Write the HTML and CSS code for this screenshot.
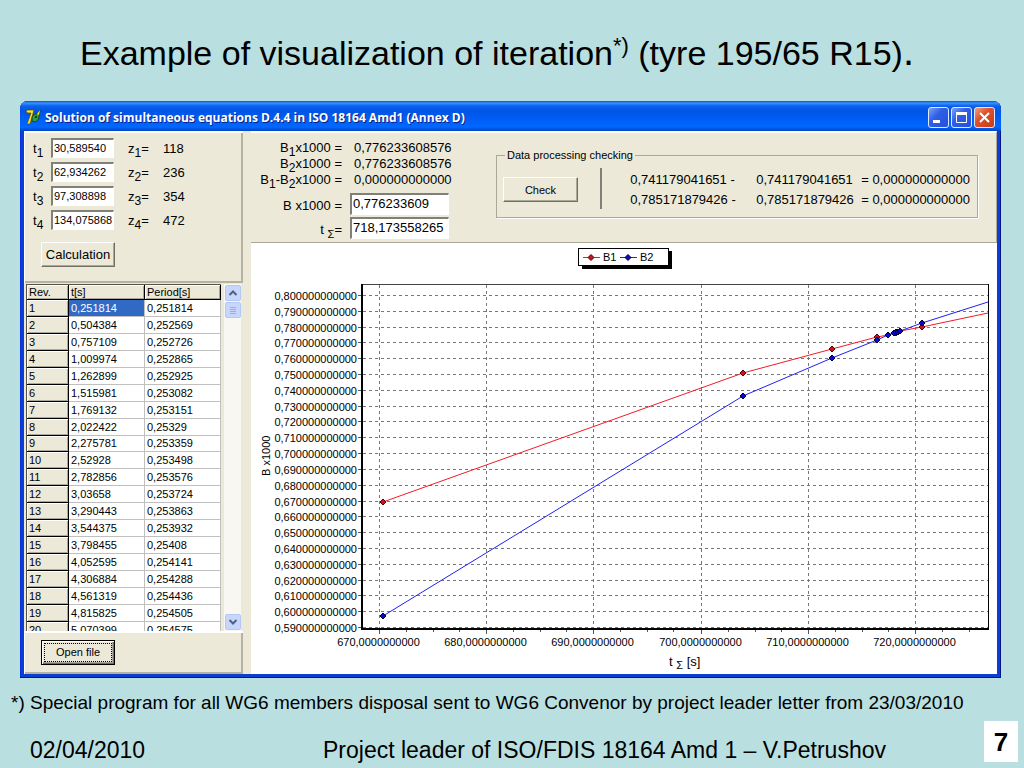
FILE: index.html
```html
<!DOCTYPE html>
<html lang="en">
<head>
    <meta charset="UTF-8">
    <title>Example of visualization of iteration</title>
    <link rel="stylesheet" href="styles.css">
</head>
<body>

<h1>Example of visualization of iteration<sup>*)</sup> (tyre 195/65 R15)<span class="dot">.</span></h1>

<main class="window">
    <header class="titlebar">
        <svg class="app-icon" width="16" height="16" viewBox="0 0 16 16">
            <path d="M1 3 L2 1 H9 L5 15 H2 L6 4 H3 Z" fill="#ffe12e" stroke="#5a4a00" stroke-width="0.7"/>
            <path d="M7 10 C7 6 10 5 12 5 L15 1 L14 7 C14 12 10 14 7 12 Z" fill="#2f9e3c" stroke="#12391a" stroke-width="0.8"/>
            <path d="M12 5 L15 1 L14 6 Z" fill="#ffe12e"/>
            <circle cx="11" cy="8" r="1" fill="#06240c"/>
        </svg>
        <h2>Solution of simultaneous equations D.4.4 in ISO 18164 Amd1 (Annex D)</h2>
        <button class="win-btn" aria-label="Minimize">
            <svg width="19" height="19" viewBox="0 0 19 19"><path d="M4 13.5 H11" stroke="#fff" stroke-width="3"/></svg>
        </button>
        <button class="win-btn" aria-label="Maximize">
            <svg width="19" height="19" viewBox="0 0 19 19"><path d="M4.5 5 V14.5 H14.5 V5" fill="none" stroke="#fff"/><path d="M4 5.5 H15" stroke="#fff" stroke-width="3"/></svg>
        </button>
        <button class="win-btn close" aria-label="Close">
            <svg width="19" height="19" viewBox="0 0 19 19"><path d="M5 5 L14 14 M14 5 L5 14" stroke="#fff" stroke-width="2"/></svg>
        </button>
    </header>

    <div class="client">
        <section class="left">
            <div class="panel times">
                <div class="time-row"><label for="t1">t<sub>1</sub></label><input type="text" id="t1" value="30,589540"><span>z<sub>1</sub>=</span><span>118</span></div>
                <div class="time-row"><label for="t2">t<sub>2</sub></label><input type="text" id="t2" value="62,934262"><span>z<sub>2</sub>=</span><span>236</span></div>
                <div class="time-row"><label for="t3">t<sub>3</sub></label><input type="text" id="t3" value="97,308898"><span>z<sub>3</sub>=</span><span>354</span></div>
                <div class="time-row"><label for="t4">t<sub>4</sub></label><input type="text" id="t4" value="134,075868"><span>z<sub>4</sub>=</span><span>472</span></div>
                <button class="btn calc">Calculation</button>
            </div>

            <div class="table-box">
                <div class="table-view">
                    <table>
                        <thead>
                            <tr><th>Rev.</th><th>t[s]</th><th>Period[s]</th></tr>
                        </thead>
                        <tbody>
                            <tr><th>1</th><td class="selected">0,251814</td><td>0,251814</td></tr>
                            <tr><th>2</th><td>0,504384</td><td>0,252569</td></tr>
                            <tr><th>3</th><td>0,757109</td><td>0,252726</td></tr>
                            <tr><th>4</th><td>1,009974</td><td>0,252865</td></tr>
                            <tr><th>5</th><td>1,262899</td><td>0,252925</td></tr>
                            <tr><th>6</th><td>1,515981</td><td>0,253082</td></tr>
                            <tr><th>7</th><td>1,769132</td><td>0,253151</td></tr>
                            <tr><th>8</th><td>2,022422</td><td>0,25329</td></tr>
                            <tr><th>9</th><td>2,275781</td><td>0,253359</td></tr>
                            <tr><th>10</th><td>2,52928</td><td>0,253498</td></tr>
                            <tr><th>11</th><td>2,782856</td><td>0,253576</td></tr>
                            <tr><th>12</th><td>3,03658</td><td>0,253724</td></tr>
                            <tr><th>13</th><td>3,290443</td><td>0,253863</td></tr>
                            <tr><th>14</th><td>3,544375</td><td>0,253932</td></tr>
                            <tr><th>15</th><td>3,798455</td><td>0,25408</td></tr>
                            <tr><th>16</th><td>4,052595</td><td>0,254141</td></tr>
                            <tr><th>17</th><td>4,306884</td><td>0,254288</td></tr>
                            <tr><th>18</th><td>4,561319</td><td>0,254436</td></tr>
                            <tr><th>19</th><td>4,815825</td><td>0,254505</td></tr>
                            <tr><th>20</th><td>5,070399</td><td>0,254575</td></tr>
                        </tbody>
                    </table>
                </div>
                <div class="scrollbar">
                    <button aria-label="Scroll up"><svg width="14" height="14" viewBox="0 0 14 14"><path d="M3.5 9 L7 5.5 L10.500 9" fill="none" stroke="#4d6185" stroke-width="2"/></svg></button>
                    <div class="thumb"><svg width="14" height="14" viewBox="0 0 14 14"><path d="M4 4.500 H10 M4 6.500 H10 M4 8.500 H10 M4 10.500 H10" stroke="#8cb0f8"/></svg></div>
                    <button class="down" aria-label="Scroll down"><svg width="14" height="14" viewBox="0 0 14 14"><path d="M3.5 5 L7 8.500 L10.500 5" fill="none" stroke="#4d6185" stroke-width="2"/></svg></button>
                </div>
            </div>

            <div class="panel file">
                <button class="btn open"><span>Open file</span></button>
            </div>
        </section>

        <section class="right">
            <div class="results">
                <div class="values">
                    <div class="sums">
                        <span>B<sub>1</sub>x1000 =</span><span>0,776233608576</span>
                        <span>B<sub>2</sub>x1000 =</span><span>0,776233608576</span>
                        <span>B<sub>1</sub>-B<sub>2</sub>x1000 =</span><span>0,000000000000</span>
                    </div>
                    <div class="outputs">
                        <label for="b">B x1000 =</label><input type="text" id="b" value="0,776233609">
                        <label for="ts">t <sub class="sigma">&Sigma;</sub>=</label><input type="text" id="ts" value="718,173558265">
                    </div>
                </div>
                <fieldset>
                    <legend>Data processing checking</legend>
                    <button class="btn check">Check</button>
                    <div class="checks">
                        <span>0,741179041651 -</span><span>0,741179041651</span><span>= 0,000000000000</span>
                        <span>0,785171879426 -</span><span>0,785171879426</span><span>= 0,000000000000</span>
                    </div>
                </fieldset>
            </div>

            <svg class="chart" viewBox="0 0 746 431">
                <g>
                    <rect x="331" y="8" width="90" height="18" fill="#000"/>
                    <rect x="327.500" y="5.500" width="90" height="17" fill="#fff" stroke="#000"/>
                    <path class="b1" d="M332 14.500 H349"/>
                    <path class="b1 point" d="M340 11.500 L343 14.500 L340 17.500 L337 14.500 Z"/>
                    <text x="352" y="18">B1</text>
                    <path class="b2" d="M369 14.500 H386"/>
                    <path class="b2 point" d="M377 11.500 L380 14.500 L377 17.500 L374 14.500 Z"/>
                    <text x="389" y="18">B2</text>
                </g>
                <g id="grid"></g>
                <path d="M110 41.500 H738" stroke="#444" stroke-width="1"/>
                <path d="M737.500 41 V387" stroke="#000"/>
                <path d="M111 41 V386 H738" fill="none" stroke="#000" stroke-width="2"/>
                <g id="series"></g>
                <text class="axis-title" transform="translate(19 233) rotate(-90)">B x1000</text>
                <text class="axis-name" x="418" y="423">t <tspan class="low" dy="3">&Sigma;</tspan><tspan dy="-3"> [s]</tspan></text>
            </svg>
        </section>
    </div>
</main>

<p class="note">*) Special program for all WG6 members disposal sent to WG6 Convenor by project leader letter from 23/03/2010</p>

<footer>
    <span class="date">02/04/2010</span>
    <span class="author">Project leader of ISO/FDIS 18164 Amd 1 – V.Petrushov</span>
    <span class="page">7</span>
</footer>

<script>
    const ns = "http://www.w3.org/2000/svg";
    const grid = document.getElementById("grid");
    const series = document.getElementById("series");

    function add(parent, tag, attrs, text) {
        const el = document.createElementNS(ns, tag);
        for (const key in attrs) el.setAttribute(key, attrs[key]);
        if (text) el.textContent = text;
        parent.appendChild(el);
    }

    // horizontal lines, 0.80 down to 0.59
    for (let i = 0; i <= 21; i++) {
        const y = Math.round(52 + i * 15.81) + 0.5;
        add(grid, "path", { d: `M112 ${y} H737`, class: "line" });
        add(grid, "path", { d: `M107 ${y} H111`, class: "tick" });
        add(grid, "text", { x: 106, y: y + 4, class: "y-label" }, "0," + (80 - i) + "0000000000");
    }

    // vertical lines, 670 to 720, three small ticks between them
    for (let i = 0; i <= 5; i++) {
        const x = Math.round(128 + i * 107.2) + 0.5;
        add(grid, "path", { d: `M${x} 42 V386`, class: "line" });
        add(grid, "path", { d: `M${x} 387 V391`, class: "tick" });
        add(grid, "text", { x: x - 1, y: 403, class: "x-label" }, (670 + i * 10) + ",0000000000");
        for (let k = 1; k < 4; k++) {
            const m = Math.floor(x + k * 26.8) + 0.5;
            if (m < 737) add(grid, "path", { d: `M${m} 387 V389`, class: "tick" });
        }
    }

    const b1 = [[132, 259], [492, 130], [581, 106], [626, 94], [637, 92], [643, 90], [645, 90], [647, 89], [649, 88], [671, 84], [737, 70]];
    const b2 = [[132, 373], [492, 153], [581, 115], [626, 97], [637, 92], [643, 90], [645, 89], [647, 89], [649, 88], [671, 80], [737, 59]];

    function draw(points, name) {
        add(series, "polyline", { points: points.join(" "), class: name });
        points.slice(0, -1).forEach(([x, y]) => {
            add(series, "path", { d: `M${x} ${y - 3} L${x + 3} ${y} L${x} ${y + 3} L${x - 3} ${y} Z`, class: name + " point" });
        });
    }

    draw(b1, "b1");
    draw(b2, "b2");
</script>

</body>
</html>
```
FILE: styles.css
```css
* {
    box-sizing: border-box;
    margin: 0;
    padding: 0;
}
body {
    font-family: "Liberation Sans", Arial, sans-serif;
    background-color: #b9dfe1;
    color: #000;
    min-height: 100vh;
}
h1 {
    height: 101px;
    padding: 33px 30px 0 0;
    font-size: 34px;
    line-height: 40px;
    font-weight: normal;
    text-align: center;
}
h1 sup {
    font-size: 22px;
    line-height: 0;
}
h1 .dot {
    font-size: 40px;
    line-height: 0;
}

/* window */
.window {
    margin: 0 23px 0 20px;
    padding: 0 4px 4px;
    border-radius: 8px 8px 0 0;
    background-color: #0a3fd2;
    box-shadow: inset -1px -1px 0 #00138c, inset 1px 0 0 #0831d9;
    font-size: 13px;
}
.titlebar {
    display: flex;
    align-items: center;
    gap: 2px;
    height: 30px;
    margin: 0 -4px;
    padding: 2px 6px 0 5px;
    border-radius: 8px 8px 0 0;
    background: linear-gradient(#0a50c8 0, #3c92ff 2px, #0a62ee 5px, #0054e3 10px, #0060fa 20px, #0068ff 26px, #0045c4 30px);
}
.titlebar h2 {
    flex: 1;
    margin-left: 2px;
    font-family: "Open Sans", sans-serif;
    font-size: 12px;
    font-weight: bold;
    color: #fff;
    text-shadow: 1px 1px 0 #0a1f80;
    white-space: nowrap;
}
.win-btn {
    width: 21px;
    height: 21px;
    border: 1px solid #dfe9ff;
    border-radius: 3px;
    background: linear-gradient(135deg, #7ba0f8, #2f5fe6 40%, #2450dc);
}
.win-btn svg {
    display: block;
}
.win-btn.close {
    background: linear-gradient(135deg, #f0a080, #e0502c 40%, #c83c18);
}
.client {
    display: grid;
    grid-template-columns: 219px 1fr;
    gap: 8px;
    background-color: #ece9d8;
}

/* left column */
.panel {
    border: solid #fff;
    border-width: 2px 0 0 1px;
    box-shadow: inset -2px -2px 0 #b5b2a2;
}
.times {
    height: 152px;
    padding: 5px 0 0 8px;
}
.time-row {
    display: grid;
    grid-template-columns: 18px 63px 35px 1fr;
    align-items: center;
    height: 20px;
    margin-bottom: 4px;
}
.time-row span {
    padding-left: 14px;
    white-space: nowrap;
}
sub {
    font-size: 12px;
    line-height: 0;
    vertical-align: -4px;
}
.sigma, .low {
    font-size: 11px;
}
input {
    width: 100%;
    height: 20px;
    padding: 0 0 1px 1px;
    border: solid;
    border-width: 2px 1px 1px 2px;
    border-color: #808078 #fff #fff #808078;
    background-color: #fff;
    font-family: inherit;
    font-size: 11px;
    color: #000;
}
.btn {
    height: 25px;
    border: 1px solid;
    border-color: #fff #716f64 #716f64 #fff;
    background-color: #ece9d8;
    box-shadow: inset -1px -1px 0 #aca899;
    font-family: inherit;
    font-size: 11px;
    color: #000;
}
.calc {
    display: block;
    width: 74px;
    margin: 12px 0 0 8px;
    font-size: 13px;
}
.table-box {
    display: flex;
    height: 348px;
    padding: 1px 2px 0;
}
.table-view {
    width: 195px;
    overflow: hidden;
    border: solid #55534a;
    border-width: 1px 0 0 1px;
}
table {
    width: 194px;
    height: 354px;
    table-layout: fixed;
    border-collapse: separate;
    border-spacing: 0;
    font-size: 11px;
    line-height: 14px;
    background-color: #fff;
}
th, td {
    padding: 0 0 0 2px;
    border: solid #c0c0c0;
    border-width: 0 1px 1px 0;
    text-align: left;
    font-weight: normal;
}
th {
    border-color: #000;
    background-color: #ece9d8;
    box-shadow: inset 1px 1px 0 #fff, inset -1px -1px 0 #aca899;
}
th:first-child {
    width: 42px;
}
.selected {
    background-color: #316ac5;
    color: #fff;
}
.scrollbar {
    display: flex;
    flex-direction: column;
    flex: 1;
    align-items: center;
    margin-left: 3px;
    padding: 1px 0;
    background-color: #f8f7f2;
}
.scrollbar button, .thumb {
    width: 16px;
    height: 16px;
    margin-bottom: 1px;
    border: 1px solid #b4c8f6;
    border-radius: 2px;
    background-color: #c8d6fb;
}
.scrollbar svg {
    display: block;
}
.scrollbar .down {
    margin-top: auto;
    margin-bottom: 0;
}
.file {
    height: 43px;
    padding: 7px 0 0 16px;
}
.open {
    width: 74px;
    padding: 2px;
    border-color: #000;
    box-shadow: inset 1px 1px 0 #fff, inset -1px -1px 0 #716f64, inset -2px -2px 0 #aca899;
}
.open span {
    display: block;
    border: 1px dotted #000;
    line-height: 17px;
}

/* right column */
.results {
    display: flex;
    justify-content: space-between;
    height: 112px;
    padding: 7px 18px 0 8px;
    border-top: 2px solid #fff;
    border-right: 1px solid #aca899;
    border-bottom: 1px solid #aca899;
    white-space: nowrap;
}
.values {
    width: 190px;
}
.sums {
    display: grid;
    grid-template-columns: 83px 1fr;
    column-gap: 12px;
    line-height: 16px;
}
.outputs {
    display: grid;
    grid-template-columns: 83px 99px;
    column-gap: 8px;
    row-gap: 2px;
    align-items: center;
    margin-top: 5px;
}
.sums span:nth-child(odd), .outputs label {
    justify-self: end;
}
.outputs label {
    padding-top: 2px;
}
.outputs input {
    height: 22px;
    padding-bottom: 2px;
    font-size: 13px;
}
fieldset {
    display: flex;
    justify-content: space-between;
    width: 482px;
    height: 70px;
    margin-top: 8px;
    padding: 14px 7px 0 6px;
    border: 1px solid #aca899;
    box-shadow: 1px 1px 0 #fff;
}
legend {
    margin-left: 2px;
    padding: 0 2px;
    font-size: 11px;
    line-height: 14px;
}
.check {
    width: 75px;
    margin-top: 1px;
}
.checks {
    display: grid;
    grid-template-columns: 126px 105px auto;
    height: 41px;
    margin-top: -8px;
    padding: 2px 0 0 28px;
    border-left: 2px solid #808078;
    line-height: 20px;
}
.chart {
    display: block;
    width: 100%;
    height: auto;
    background-color: #fff;
    font-size: 11px;
}
.line {
    stroke: #777;
    stroke-dasharray: 3 3;
}
.tick {
    stroke: #555;
}
.y-label {
    text-anchor: end;
}
.x-label {
    text-anchor: middle;
}
.axis-name {
    font-size: 13px;
}
.axis-name .low {
    font-size: 11px;
}
.b1 {
    fill: none;
    stroke: #f01c28;
}
.b2 {
    fill: none;
    stroke: #2020f0;
}
.b1.point {
    fill: #c81420;
    stroke: #500;
}
.b2.point {
    fill: #0808d0;
    stroke: #003;
}

/* bottom of the slide */
.note {
    padding: 14px 0 0 11px;
    font-size: 19px;
    line-height: 22px;
}
footer {
    display: flex;
    align-items: center;
    margin-top: 6px;
    padding: 0 6px 0 30px;
    font-size: 23px;
    line-height: 26px;
}
.date {
    width: 293px;
    padding-top: 17px;
}
.author {
    flex: 1;
    padding-top: 17px;
}
.page {
    width: 34px;
    height: 41px;
    background-color: #fff;
    font-size: 26px;
    font-weight: bold;
    line-height: 43px;
    text-align: center;
}
```
